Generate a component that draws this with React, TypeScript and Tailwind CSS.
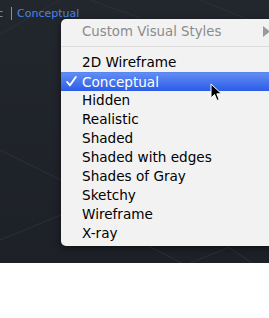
import React from "react";

const items = [
  "2D Wireframe",
  "Conceptual",
  "Hidden",
  "Realistic",
  "Shaded",
  "Shaded with edges",
  "Shades of Gray",
  "Sketchy",
  "Wireframe",
  "X-ray",
];

export default function App() {
  return (
    <div className="w-[269px] h-[318px] bg-white overflow-hidden" style={{ fontFamily: '"DejaVu Sans", sans-serif' }}>
      <div className="relative h-[263px] bg-gradient-to-b from-[#22262d] to-[#1d2027] overflow-hidden">
        <svg className="absolute inset-0" width="269" height="263">
          <g stroke="#2c3038" strokeWidth="1" fill="none">
            <line x1="-10" y1="40" x2="60" y2="0" />
            <line x1="90" y1="0" x2="140" y2="18" />
            <line x1="200" y1="0" x2="269" y2="28" />
            <line x1="150" y1="247" x2="182" y2="263" />
            <line x1="190" y1="263" x2="230" y2="247" />
            <line x1="228" y1="247" x2="252" y2="263" />
            <line x1="0" y1="240" x2="61" y2="215" />
            <line x1="0" y1="150" x2="61" y2="180" />
          </g>
        </svg>
        <div className="relative flex items-center h-[26px] ml-[-3px] text-[11px] leading-none">
          <span className="text-[#8a8f99]">c</span>
          <span className="ml-[8px] w-px h-[13px] bg-[#8a8f99]" />
          <span className="ml-[5px] text-[#4a84e6]">Conceptual</span>
        </div>
        <div className="absolute left-[61px] top-[19px] w-[230px] h-[227px] bg-[#f2f2f2] rounded-l-[5px] shadow-[0_2px_6px_rgba(0,0,0,0.5)] text-[13.6px]">
          <div className="relative h-[27px] pt-[3px] pl-[21px] leading-[19px] text-[#8b8b8b] text-[13.3px]">
            Custom Visual Styles
            <svg className="absolute left-[202px] top-[7px]" width="8" height="11" viewBox="0 0 8 11">
              <polygon points="0,0 7,5.5 0,11" fill="#9a9a9a" />
            </svg>
          </div>
          <div className="h-px bg-[#dcdcdc]" />
          <div className="pt-[6px]">
            {items.map((it) =>
              it === "Conceptual" ? (
                <div
                  key={it}
                  className="relative h-[19px] leading-[19px] pl-[21px] text-white bg-gradient-to-b from-[#628cf3] to-[#2b5ce8] border-t border-[#5a86f2]"
                >
                  <svg className="absolute left-[5px] top-[3px]" width="11" height="11" viewBox="0 0 11 11">
                    <path d="M1.2 6 L4 9.3 L9.8 1" fill="none" stroke="#fff" strokeWidth="1.9" strokeLinecap="round" strokeLinejoin="round" />
                  </svg>
                  {it}
                </div>
              ) : (
                <div key={it} className="h-[19px] leading-[19px] pl-[21px] text-black">
                  {it}
                </div>
              )
            )}
          </div>
        </div>
        <svg className="absolute left-[210px] top-[83px]" width="13" height="20" viewBox="0 0 13 20">
          <path d="M1 1 L1 15 L4.5 11.5 L7 17.5 L9.2 16.6 L6.8 10.8 L11.5 10.8 Z" fill="#000" stroke="#fff" strokeWidth="1" strokeLinejoin="round" />
        </svg>
      </div>
    </div>
  );
}
